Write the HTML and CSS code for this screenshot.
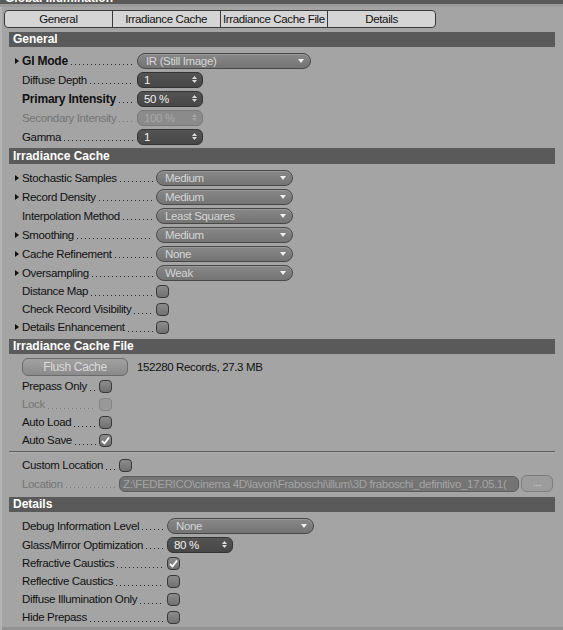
FILE: index.html
```html
<!DOCTYPE html>
<html lang="en">
<head>
  <meta charset="UTF-8">
  <title>Global Illumination</title>
  <link rel="stylesheet" href="styles.css">
</head>
<body>
  <div class="panel">
    <div class="titlebar"><span>Global Illumination</span></div>

    <div class="tabs">
      <div class="tab">General</div>
      <div class="tab">Irradiance Cache</div>
      <div class="tab">Irradiance Cache File</div>
      <div class="tab">Details</div>
    </div>

    <!-- General -->
    <section class="group general">
      <h2 class="group-title">General</h2>
      <div class="rows">
        <div class="row">
          <span class="arrow on"></span>
          <span class="lbl"><b>GI Mode</b><i class="dots"></i></span>
          <div class="select w-gi"><span class="val">IR (Still Image)</span><span class="caret"></span></div>
        </div>
        <div class="row">
          <span class="arrow"></span>
          <span class="lbl">Diffuse Depth<i class="dots"></i></span>
          <div class="spin"><span class="val">1</span><svg width="5" height="9" viewBox="0 0 5 9"><polygon points="0,4 2.5,1 5,4"/><polygon points="0,5 2.5,8 5,5"/></svg></div>
        </div>
        <div class="row">
          <span class="arrow"></span>
          <span class="lbl"><b>Primary Intensity</b><i class="dots"></i></span>
          <div class="spin"><span class="val">50 %</span><svg width="5" height="9" viewBox="0 0 5 9"><polygon points="0,4 2.5,1 5,4"/><polygon points="0,5 2.5,8 5,5"/></svg></div>
        </div>
        <div class="row off">
          <span class="arrow"></span>
          <span class="lbl">Secondary Intensity<i class="dots"></i></span>
          <div class="spin"><span class="val">100 %</span><svg width="5" height="9" viewBox="0 0 5 9"><polygon points="0,4 2.5,1 5,4"/><polygon points="0,5 2.5,8 5,5"/></svg></div>
        </div>
        <div class="row">
          <span class="arrow"></span>
          <span class="lbl">Gamma<i class="dots"></i></span>
          <div class="spin"><span class="val">1</span><svg width="5" height="9" viewBox="0 0 5 9"><polygon points="0,4 2.5,1 5,4"/><polygon points="0,5 2.5,8 5,5"/></svg></div>
        </div>
      </div>
      <div class="sep"></div>
    </section>

    <!-- Irradiance Cache -->
    <section class="group irr">
      <h2 class="group-title">Irradiance Cache</h2>
      <div class="rows">
        <div class="row">
          <span class="arrow on"></span>
          <span class="lbl">Stochastic Samples<i class="dots"></i></span>
          <div class="select w-irr"><span class="val">Medium</span><span class="caret"></span></div>
        </div>
        <div class="row">
          <span class="arrow on"></span>
          <span class="lbl">Record Density<i class="dots"></i></span>
          <div class="select w-irr"><span class="val">Medium</span><span class="caret"></span></div>
        </div>
        <div class="row">
          <span class="arrow"></span>
          <span class="lbl">Interpolation Method<i class="dots"></i></span>
          <div class="select w-irr"><span class="val">Least Squares</span><span class="caret"></span></div>
        </div>
        <div class="row">
          <span class="arrow on"></span>
          <span class="lbl">Smoothing<i class="dots"></i></span>
          <div class="select w-irr"><span class="val">Medium</span><span class="caret"></span></div>
        </div>
        <div class="row">
          <span class="arrow on"></span>
          <span class="lbl">Cache Refinement<i class="dots"></i></span>
          <div class="select w-irr"><span class="val">None</span><span class="caret"></span></div>
        </div>
        <div class="row">
          <span class="arrow on"></span>
          <span class="lbl">Oversampling<i class="dots"></i></span>
          <div class="select w-irr"><span class="val">Weak</span><span class="caret"></span></div>
        </div>
        <div class="row short">
          <span class="arrow"></span>
          <span class="lbl">Distance Map<i class="dots"></i></span>
          <span class="check"></span>
        </div>
        <div class="row short">
          <span class="arrow"></span>
          <span class="lbl">Check Record Visibility<i class="dots"></i></span>
          <span class="check"></span>
        </div>
        <div class="row short">
          <span class="arrow on"></span>
          <span class="lbl">Details Enhancement<i class="dots"></i></span>
          <span class="check"></span>
        </div>
      </div>
    </section>

    <!-- Irradiance Cache File -->
    <section class="group file">
      <h2 class="group-title">Irradiance Cache File</h2>
      <div class="rows">
        <div class="row flush">
          <span class="arrow"></span>
          <div class="button">Flush Cache</div>
          <span class="records">152280 Records, 27.3 MB</span>
        </div>
        <div class="row short">
          <span class="arrow"></span>
          <span class="lbl">Prepass Only<i class="dots"></i></span>
          <span class="check"></span>
        </div>
        <div class="row short off">
          <span class="arrow"></span>
          <span class="lbl">Lock<i class="dots"></i></span>
          <span class="check"></span>
        </div>
        <div class="row short">
          <span class="arrow"></span>
          <span class="lbl">Auto Load<i class="dots"></i></span>
          <span class="check"></span>
        </div>
        <div class="row short">
          <span class="arrow"></span>
          <span class="lbl">Auto Save<i class="dots"></i></span>
          <span class="check"><svg width="11" height="11" viewBox="0 0 11 11"><path d="M2 6 L4.5 8.5 L9 2.5"/></svg></span>
        </div>
      </div>
      <div class="sep sep-mid"></div>
      <div class="rows loc">
        <div class="row short">
          <span class="arrow"></span>
          <span class="lbl">Custom Location<i class="dots"></i></span>
          <span class="check"></span>
        </div>
        <div class="row off">
          <span class="arrow"></span>
          <span class="lbl">Location<i class="dots"></i></span>
          <div class="field">Z:\FEDERICO\cinema 4D\lavori\Fraboschi\illum\3D fraboschi_definitivo_17.05.1(</div>
          <div class="browse">...</div>
        </div>
      </div>
    </section>

    <!-- Details -->
    <section class="group details">
      <h2 class="group-title">Details</h2>
      <div class="rows">
        <div class="row">
          <span class="arrow"></span>
          <span class="lbl">Debug Information Level<i class="dots"></i></span>
          <div class="select w-debug"><span class="val">None</span><span class="caret"></span></div>
        </div>
        <div class="row">
          <span class="arrow"></span>
          <span class="lbl">Glass/Mirror Optimization<i class="dots"></i></span>
          <div class="spin"><span class="val">80 %</span><svg width="5" height="9" viewBox="0 0 5 9"><polygon points="0,4 2.5,1 5,4"/><polygon points="0,5 2.5,8 5,5"/></svg></div>
        </div>
        <div class="row short">
          <span class="arrow"></span>
          <span class="lbl">Refractive Caustics<i class="dots"></i></span>
          <span class="check"><svg width="11" height="11" viewBox="0 0 11 11"><path d="M2 6 L4.5 8.5 L9 2.5"/></svg></span>
        </div>
        <div class="row short">
          <span class="arrow"></span>
          <span class="lbl">Reflective Caustics<i class="dots"></i></span>
          <span class="check"></span>
        </div>
        <div class="row short">
          <span class="arrow"></span>
          <span class="lbl">Diffuse Illumination Only<i class="dots"></i></span>
          <span class="check"></span>
        </div>
        <div class="row short">
          <span class="arrow"></span>
          <span class="lbl">Hide Prepass<i class="dots"></i></span>
          <span class="check"></span>
        </div>
      </div>
    </section>
  </div>
</body>
</html>
```

FILE: styles.css
```css
body {
  margin: 0;
  background-color: #a4a4a4;
  color: #111;
  font-family: "Liberation Sans", Arial, sans-serif;
  font-size: 11.5px;
  letter-spacing: -0.35px;
}
.panel {
  width: 563px;
  height: 630px;
  overflow: hidden;
  box-shadow: inset 2px 0 #b3b3b3, inset 0 -3px #939393;
}
.titlebar {
  height: 4px;
  overflow: hidden;
  background-color: #595959;
  border-bottom: 3px solid #9b9b9b;
}
.titlebar span {
  display: block;
  margin: -8px 0 0 5px;
  color: #fff;
  font: bold 12px/13px "Liberation Sans", Arial, sans-serif;
  letter-spacing: 0;
}
.tabs {
  display: flex;
  width: 432px;
  height: 18px;
  margin: 3px 0 4px 4px;
  box-sizing: border-box;
  border: 1px solid #3a3a3a;
  border-radius: 4px;
  overflow: hidden;
  background-color: #d5d5d5;
}
.tab {
  flex: 1;
  text-align: center;
  line-height: 16px;
  border-left: 1px solid #3a3a3a;
}
.tab:first-child {
  border-left: 0;
}
.group {
  margin: 0 8px 0 9px;
}
.group-title {
  margin: 0;
  height: 15px;
  padding-left: 4px;
  background-color: #5a5a5a;
  color: #fff;
  font: bold 12px/15px "Liberation Sans", Arial, sans-serif;
  letter-spacing: 0;
}
.rows {
  padding-top: 4px;
}
.row {
  display: flex;
  align-items: center;
  height: 19px;
  padding-left: 6px;
}
.row.short {
  height: 18px;
}
.arrow {
  flex: none;
  width: 7px;
  display: flex;
  align-items: center;
}
.arrow.on::before {
  content: "";
  border-left: 4px solid #111;
  border-top: 3.5px solid transparent;
  border-bottom: 3.5px solid transparent;
}
.lbl {
  flex: none;
  display: flex;
  align-items: center;
  white-space: nowrap;
}
.lbl b {
  font-size: 12px;
  letter-spacing: -0.2px;
}
.dots {
  flex: 1;
  height: 1px;
  margin: 8px 3px 0 3px;
  background: linear-gradient(to right, #2a2a2a 1px, transparent 1px) 0 0 / 4px 1px repeat-x;
}
.general .lbl { width: 115px; }
.irr .lbl { width: 134px; }
.file .lbl { width: 77px; }
.file .loc .lbl { width: 97px; }
.details .lbl { width: 145px; }

.row.off .lbl {
  color: #747474;
}
.row.off .dots {
  background-image: linear-gradient(to right, #787878 1px, transparent 1px);
}

/* dropdowns */
.select {
  display: flex;
  align-items: center;
  height: 16px;
  box-sizing: border-box;
  padding: 0 6px 0 8px;
  border: 1px solid #484848;
  border-radius: 8px;
  background: linear-gradient(#888, #747474);
  box-shadow: inset 0 1px #989898;
  color: #d6d6d6;
}
.select .val {
  flex: 1;
}
.caret {
  border-top: 4px solid #f0f0f0;
  border-left: 3.5px solid transparent;
  border-right: 3.5px solid transparent;
}
.w-gi { width: 174px; }
.w-irr { width: 137px; }
.w-debug { width: 147px; }

/* number fields */
.spin {
  display: flex;
  align-items: center;
  width: 66px;
  height: 16px;
  box-sizing: border-box;
  padding: 0 5px 0 6px;
  border: 1px solid #343434;
  border-radius: 6px;
  background: linear-gradient(#545454, #474747);
  color: #f0f0f0;
}
.spin .val {
  flex: 1;
}
.spin svg {
  fill: #ddd;
}
.row.off .spin {
  border-color: #7a7a7a;
  background: #8b8b8b;
  color: #a9a9a9;
}
.row.off .spin svg {
  fill: #a5a5a5;
}

/* checkboxes */
.check {
  flex: none;
  display: flex;
  align-items: center;
  justify-content: center;
  width: 13px;
  height: 13px;
  box-sizing: border-box;
  border: 1px solid #383838;
  border-radius: 4px;
  background: linear-gradient(#8c8c8c, #707070);
}
.check svg path {
  fill: none;
  stroke: #fff;
  stroke-width: 1.8;
}
.row.off .check {
  border-color: #858585;
  background: #999;
}

/* file section */
.row.flush {
  height: 18px;
  margin-bottom: 1px;
}
.button {
  width: 106px;
  height: 18px;
  box-sizing: border-box;
  border: 1px solid #6b6b6b;
  border-radius: 6px;
  background: linear-gradient(#a2a2a2, #8a8a8a);
  color: #dadada;
  text-align: center;
  line-height: 16px;
  font-size: 12px;
}
.records {
  margin-left: 9px;
}
.sep {
  height: 1px;
  margin-top: 2px;
  background-color: #5c5c5c;
}
.sep-mid {
  margin: 2px 0 0;
  box-shadow: 0 1px #b0b0b0;
}
.loc {
  padding-top: 4px;
}
.field {
  width: 400px;
  height: 16px;
  box-sizing: border-box;
  padding-left: 3px;
  overflow: hidden;
  white-space: nowrap;
  border: 1px solid #5e5e5e;
  border-radius: 6px;
  background-color: #747474;
  color: #a4a4a4;
  line-height: 14px;
}
.browse {
  width: 32px;
  height: 17px;
  margin-left: 2px;
  box-sizing: border-box;
  border: 1px solid #7c7c7c;
  border-radius: 6px;
  background-color: #9c9c9c;
  color: #d0d0d0;
  text-align: center;
  line-height: 13px;
}
.irr {
  margin-bottom: 3px;
}
.file {
  margin-bottom: 4px;
}
.details .rows {
  padding-top: 4px;
}
```
